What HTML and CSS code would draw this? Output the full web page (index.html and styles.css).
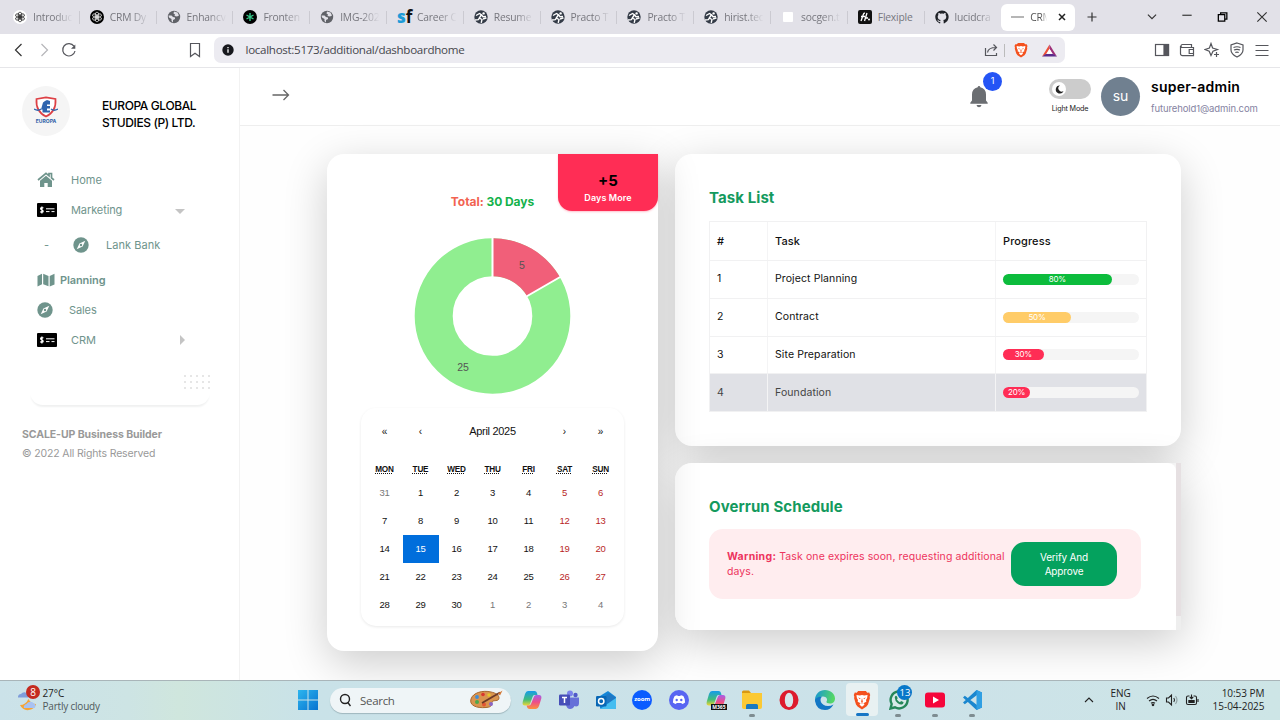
FILE: index.html
```html
<!DOCTYPE html>
<html lang="en">
<head>
<meta charset="utf-8">
<title>CRM</title>
<link rel="stylesheet" href="styles.css">
</head>
<body>
<svg class="defs" width="0" height="0">
  <symbol id="knot" viewBox="0 0 14 14"><g fill="none" stroke="currentColor" stroke-width=".8"><ellipse cx="7" cy="5" rx="1.800" ry="2.900"/><ellipse cx="7" cy="5" rx="1.800" ry="2.900" transform="rotate(60 7 7)"/><ellipse cx="7" cy="5" rx="1.800" ry="2.900" transform="rotate(120 7 7)"/><ellipse cx="7" cy="5" rx="1.800" ry="2.900" transform="rotate(180 7 7)"/><ellipse cx="7" cy="5" rx="1.800" ry="2.900" transform="rotate(240 7 7)"/><ellipse cx="7" cy="5" rx="1.800" ry="2.900" transform="rotate(300 7 7)"/></g></symbol>
  <symbol id="globe" viewBox="0 0 14 14"><circle cx="7" cy="7" r="6.200" fill="#606268"/><path d="M1.500 5.500h3L6 7l2 .5V9L6 10v2.500L4.500 11V9L2 7.500zM7 1.500 6.500 3.500 8 4.500 7.500 6 10 6.500l2-1-1.500-3z" fill="#e2e1e8"/></symbol>
  <symbol id="runner" viewBox="0 0 14 14"><circle cx="7" cy="7" r="6.700" fill="#343b47"/><circle cx="9.600" cy="3.400" r="1.200" fill="#fff"/><path d="M2 5.500 5.500 3.500l2.300 1.600 1.200 1.700 3-.3M7.300 5 5.300 8l2.700 1.500-.8 3.300M5.500 8 4.300 9.700l-3.300.3M9 9l3.500-1.200" fill="none" stroke="#fff" stroke-width="1.400"/></symbol>
  <symbol id="lion" viewBox="0 0 16 18"><path d="M4.500 1h7l1.200 1.400 1.800-.1.900 2.200-.5 1.600.2 1.400-1.700 5.500-1.400 1.900L8 17.500l-4-2.600L2.600 13 .9 7.500l.2-1.400-.5-1.600.9-2.200 1.800.1z" fill="#f4511e"/><path d="M3 4.500 6 5l2-.6 2 .6 3-.5-.4 2.700-1 1.800.3 1.500-2.200 1.200.5 1.600L8 15l-2.200-1.700.5-1.600-2.200-1.200.3-1.500-1-1.800z" fill="#fff"/><path d="m4.500 6.800 2.200.7-.6.8zM11.500 6.800l-2.200.7.6.8zM8 7.200l.8 3.300-.8.700-.8-.7zM6 12.200l2-.9 2 .9-2-.2z" fill="#f4511e"/></symbol>
  <symbol id="compass" viewBox="0 0 16 16"><circle cx="8" cy="8" r="7.700" fill="#6f948c"/><path d="m12.300 3.700-2.700 5.900-5.900 2.700 2.700-5.900z" fill="#fff"/><circle cx="8" cy="8" r="1.200" fill="#6f948c"/></symbol>
  <symbol id="cheque" viewBox="0 0 20 14"><rect width="20" height="14" rx="1" fill="#000"/><path d="M6.200 5.300C5.800 4.300 3.500 4.400 3.600 5.800s2.700 1 2.600 2.500-2.300 1.400-2.800.3M4.900 3.500v7" stroke="#fff" fill="none" stroke-width="1.200"/><path d="M9 5.800h8.500M9 8.600h3.500M14.500 8.600h3" stroke="#fff" stroke-width="1"/></symbol>
</svg>

<div class="tabs">
  <div class="tab"><i class="fav white"><svg><use href="#knot"/></svg></i><span>Introduc</span></div>
  <div class="tab"><i class="fav black"><svg><use href="#knot"/></svg></i><span>CRM Dy</span></div>
  <div class="tab"><i class="fav"><svg><use href="#globe"/></svg></i><span>Enhancv</span></div>
  <div class="tab"><i class="fav black"><svg viewBox="0 0 14 14"><path d="M7 3v8M3.500 5l7 4M10.500 5l-7 4" stroke="#35c98a" stroke-width="1.400"/></svg></i><span>Fronten</span></div>
  <div class="tab"><i class="fav"><svg><use href="#globe"/></svg></i><span>IMG-202</span></div>
  <div class="tab"><i class="fav sf"><b>s</b>f</i><span>Career C</span></div>
  <div class="tab"><i class="fav"><svg><use href="#runner"/></svg></i><span>Resume</span></div>
  <div class="tab"><i class="fav"><svg><use href="#runner"/></svg></i><span>Practo T</span></div>
  <div class="tab"><i class="fav"><svg><use href="#runner"/></svg></i><span>Practo T</span></div>
  <div class="tab"><i class="fav"><svg><use href="#runner"/></svg></i><span>hirist.tec</span></div>
  <div class="tab"><i class="fav blank"></i><span>socgen.t</span></div>
  <div class="tab"><i class="fav flex"><svg viewBox="0 0 14 14"><path d="M3 11 5.500 4q.4-1 1.500-.8M3 6.500h4M6.500 11 9 3M8 8h2" stroke="#fff" fill="none" stroke-width="1.300"/><circle cx="11" cy="9.500" r="1" fill="#fff"/></svg></i><span class="full">Flexiple</span></div>
  <div class="tab last"><i class="fav"><svg viewBox="0 0 16 16"><path fill="#202328" d="M8 .5C3.700.5.300 3.900.300 8.100c0 3.400 2.200 6.200 5.200 7.200.4.100.5-.2.500-.4v-1.400c-2.100.5-2.600-.9-2.600-.9-.3-.9-.8-1.100-.8-1.100-.7-.5.100-.5.100-.5.800.100 1.200.8 1.200.8.700 1.200 1.800.8 2.200.6.100-.5.300-.8.500-1-1.700-.2-3.500-.9-3.500-3.800 0-.8.300-1.500.8-2-.1-.2-.4-1 .1-2.100 0 0 .6-.2 2.100.8a7 7 0 0 1 3.800 0c1.500-1 2.100-.8 2.100-.8.500 1.100.2 1.900.1 2.100.5.500.8 1.200.8 2 0 2.900-1.800 3.600-3.500 3.800.3.200.5.700.5 1.400v2.100c0 .2.100.5.500.4 3-1 5.200-3.800 5.200-7.200C15.700 3.900 12.300.5 8 .5z"/></svg></i><span>lucidcra</span></div>
  <div class="tab active"><i class="fav dash"></i><span>CRM</span><svg class="x" viewBox="0 0 8 8"><path d="m1 1 6 6M7 1 1 7"/></svg></div>
  <svg class="plus" viewBox="0 0 10 10"><path d="M5 .5v9M.5 5h9"/></svg>
  <div class="window">
    <svg viewBox="0 0 12 12"><path d="m2.500 4 3.500 3.500L9.500 4"/></svg>
    <svg viewBox="0 0 12 12"><path d="M2 4.500h8"/></svg>
    <svg viewBox="0 0 12 12" class="bold"><path d="M2 4h5.500v5.500H2zM4 4V2.500h5.300v5.300H7.500"/></svg>
    <svg viewBox="0 0 12 12"><path d="m2 2 8 8m0-8-8 8"/></svg>
  </div>
</div>

<div class="toolbar">
  <div class="nav">
    <svg viewBox="0 0 16 16"><path d="M10.500 2 4.500 8l6 6"/></svg>
    <svg viewBox="0 0 16 16" class="dim"><path d="m5.500 2 6 6-6 6"/></svg>
    <svg viewBox="0 0 16 16"><path d="M13 4.200A6.200 6.200 0 1 0 14 9"/><path d="M14.300 2.500v4.300H10z" fill="#55565c" stroke="none"/></svg>
  </div>
  <svg class="mark" viewBox="0 0 16 16"><path d="M3.500 1.500h9v13L8 11.300l-4.500 3.200z"/></svg>
  <div class="url">
    <svg class="info" viewBox="0 0 12 12"><circle cx="6" cy="6" r="5.700" fill="#17181d"/><path d="M6 5.200v3.600M6 3v1.200" stroke="#fff" stroke-width="1.300"/></svg>
    <span>localhost:5173/additional/dashboardhome</span>
    <svg class="share" viewBox="0 0 14 14"><path d="M1.500 5v7.500h11V10M3.500 9.500C4 6 7 4.500 12 4.500M9.500 1.500l3 3-3 3"/></svg>
    <i class="bar"></i>
    <svg class="brave"><use href="#lion"/></svg>
    <svg class="bat" viewBox="0 0 16 14"><path d="M8 .5 0 13.500l4-2.300L8 5z" fill="#ee4f37"/><path d="m8 .5 8 13-4-2.300L8 5z" fill="#9d2f78"/><path d="M0 13.500h16l-4-2.800H4z" fill="#5a2b8c"/><path d="m8 5.500 3 5H5z" fill="#fff"/></svg>
  </div>
  <div class="tools">
    <svg viewBox="0 0 16 16"><rect x="1.500" y="2.500" width="13" height="11"/><path d="M10 2.500h4.500v11H10z" fill="#55565c"/></svg>
    <svg viewBox="0 0 16 16"><path d="M12.500 5V2.500h-9a1.500 1.500 0 0 0 0 3h11v8.200h-11a2 2 0 0 1-2-2V4M14.500 7.500h-4.300v4h4.300"/></svg>
    <svg viewBox="0 0 16 16"><path d="M7 1.500 8.600 6 13.500 7.500 9 9.200 7 13.500 5.200 9.200 1 7.500 5.400 6zM12.500 10v5M10 12.500h5"/></svg>
    <svg viewBox="0 0 16 16"><path d="M8 1 14 3v5c0 3.500-3 5.500-6 7-3-1.500-6-3.500-6-7V3zM4.500 5.500q3.500-1.500 7 0M5 8q3-1.300 6 0M6.300 10.500q1.700-.8 3.400 0"/></svg>
    <svg viewBox="0 0 16 16"><path d="M1.500 3.500h13M1.500 8.500h13M1.500 13.500h13"/></svg>
  </div>
</div>

<div class="app">
  <aside class="sidebar">
    <div class="brand">
      <div class="logo">
        <svg viewBox="0 0 24 21"><path d="M2.500 2.500Q8 1.500 12 .8q4 .7 9.500 1.700Q22.500 15 12 20 1.500 15 2.500 2.500z" fill="#fff" stroke="#dd4045" stroke-width="1.700"/><path d="M9 6q2-2 4-2.500l3 1V8h-3v1.500h3V12h-3v2h3v2H8.500v-3H7z" fill="#2f64ae"/><path d="M0 12.500q4 2.500 7 0M24 12.500q-4 2.500-7 0" stroke="#2f64ae" fill="none" stroke-width="1.300"/></svg>
        <span>EUROPA</span>
      </div>
      <div class="company">EUROPA GLOBAL<br>STUDIES (P) LTD.</div>
    </div>
    <nav class="menu">
      <div class="item home"><svg viewBox="0 0 18 16"><path d="M1 8 9 1.300l3 2.500V1.500h2.500v4.400L17 8" fill="none" stroke="#6f948c" stroke-width="1.700"/><path d="m3 8.800 6-5 6 5V15h-4.300v-4H7.300v4H3z" fill="#6f948c"/></svg><span>Home</span></div>
      <div class="item"><svg class="wide"><use href="#cheque"/></svg><span>Marketing</span><i class="down"></i></div>
      <div class="item sub"><em>-</em><svg class="round"><use href="#compass"/></svg><span>Lank Bank</span></div>
      <div class="item planning"><svg viewBox="0 0 18 14"><path d="M.5 3 5 .800v10.500L.5 13.500zM6.200.800 11.500 3v10.200l-5.300-2zM12.700 3 17.500.800v10.700l-4.800 2z" fill="#6f948c"/></svg><span>Planning</span></div>
      <div class="item sales"><svg class="round"><use href="#compass"/></svg><span>Sales</span></div>
      <div class="item"><svg class="wide"><use href="#cheque"/></svg><span>CRM</span><i class="right"></i></div>
      <div class="dots"></div>
    </nav>
    <div class="legal"><b>SCALE-UP Business Builder</b><span>© 2022 All Rights Reserved</span></div>
  </aside>

  <div class="page">
    <header class="header">
      <svg class="arrow" viewBox="0 0 18 12"><path d="M.5 6h16M11.500 1l5 5-5 5"/></svg>
      <div class="bell"><svg viewBox="0 0 18 22"><path d="M9 0q1.200 0 1.300 1.200Q16 2.500 16 8.500v6l1.700 2.200v1H.3v-1L2 14.500v-6q0-6 5.700-7.300Q7.800 0 9 0zM6.500 19h5Q11 21.200 9 21.200T6.500 19z" fill="#6b6e72"/></svg><span>1</span></div>
      <div class="mode"><div class="switch"><i><svg viewBox="0 0 10 10"><path d="M5.500.5a4.500 4.500 0 1 0 4 6.300A3.700 3.700 0 0 1 5.500.5z" fill="#222"/></svg></i></div><span>Light Mode</span></div>
      <div class="avatar">su</div>
      <div class="who"><b>super-admin</b><span>futurehold1@admin.com</span></div>
    </header>

    <main class="main">
      <section class="card days">
        <div class="more"><b>+5</b><span>Days More</span></div>
        <h3 class="total"><span>Total:</span> 30 Days</h3>
        <svg class="donut" viewBox="-79 -79 158 158">
          <g transform="translate(.5 0)">
          <circle r="58.800" fill="none" stroke="#90ee90" stroke-width="38"/>
          <path d="M0-77.800A77.800 77.800 0 0 1 67.400-38.900L34.500-19.900A39.800 39.800 0 0 0 0-39.800z" fill="#f15f79"/>
          <path d="M0-79v41M68.500-39.500 33-19" stroke="#fff" stroke-width="2"/>
          <text x="29.500" y="-47.500">5</text><text x="-29.500" y="54.500">25</text>
          </g>
        </svg>
        <div class="calendar">
          <div class="calnav"><span>«</span><span>‹</span><b>April 2025</b><span>›</span><span>»</span></div>
          <div class="grid week"><abbr>MON</abbr><abbr>TUE</abbr><abbr>WED</abbr><abbr>THU</abbr><abbr>FRI</abbr><abbr>SAT</abbr><abbr>SUN</abbr></div>
          <div class="grid dates">
            <span class="out">31</span><span>1</span><span>2</span><span>3</span><span>4</span><span class="red">5</span><span class="red">6</span>
            <span>7</span><span>8</span><span>9</span><span>10</span><span>11</span><span class="red">12</span><span class="red">13</span>
            <span>14</span><span class="today">15</span><span>16</span><span>17</span><span>18</span><span class="red">19</span><span class="red">20</span>
            <span>21</span><span>22</span><span>23</span><span>24</span><span>25</span><span class="red">26</span><span class="red">27</span>
            <span>28</span><span>29</span><span>30</span><span class="out">1</span><span class="out">2</span><span class="out">3</span><span class="out">4</span>
          </div>
        </div>
      </section>

      <div class="column">
        <section class="card tasks">
          <h2>Task List</h2>
          <div class="table">
            <div class="tr th"><span>#</span><span>Task</span><span>Progress</span></div>
            <div class="tr"><span>1</span><span>Project Planning</span><span><i class="track"><i class="fill green" style="width:80%">80%</i></i></span></div>
            <div class="tr"><span>2</span><span>Contract</span><span><i class="track"><i class="fill yellow" style="width:50%">50%</i></i></span></div>
            <div class="tr"><span>3</span><span>Site Preparation</span><span><i class="track"><i class="fill pink" style="width:30%">30%</i></i></span></div>
            <div class="tr hover"><span>4</span><span>Foundation</span><span><i class="track"><i class="fill pink" style="width:20%">20%</i></i></span></div>
          </div>
        </section>
        <section class="card overrun">
          <div class="body">
            <h2>Overrun Schedule</h2>
            <div class="alert"><p><b>Warning:</b> <span>Task one expires soon, requesting additional</span><br>days.</p><button>Verify And<br>Approve</button></div>
          </div>
          <div class="scroll"><i></i></div>
        </section>
      </div>
    </main>
  </div>
</div>

<div class="taskbar">
  <div class="weather">
    <div class="sky"><svg viewBox="0 0 22 24"><path d="M1 9.500a3 3 0 0 1 3-3.500 4 4 0 0 1 7 .5v3z" fill="#7f9edb"/><path d="M11.500 11q-3 6-8.500 6 3 6 9 5t7-6q-5 0-7.500-5z" fill="#f6a536"/><path d="M7 20a3 3 0 0 1 2.500-4 4.500 4.500 0 0 1 7.500-.5 2.700 2.700 0 0 1 .5 4.500z" fill="#a8c2f2"/></svg><i>8</i></div>
    <div class="temp"><b>27°C</b><span>Partly cloudy</span></div>
  </div>
  <svg class="start" viewBox="0 0 20 20"><defs><linearGradient id="w" x1="0" y1="0" x2="1" y2="1"><stop stop-color="#2cb5ee"/><stop offset="1" stop-color="#0873d0"/></linearGradient></defs><path d="M0 0h9.500v9.500H0zM10.500 0H20v9.500h-9.500zM0 10.500h9.500V20H0zM10.500 10.500H20V20h-9.500z" fill="url(#w)"/></svg>
  <div class="search">
    <svg class="lens" viewBox="0 0 12 14"><circle cx="6" cy="6" r="4.500"/><path d="m8.800 9.500 2.700 3.500"/></svg><span>Search</span>
    <svg class="palette" viewBox="0 0 36 20"><path d="M3 9C5 2.500 15 0 23 2c5 1 8 3 8 6 0 4-6 1.500-7 4s1 5-6 5.500C8 18.500 1 15 3 9z" fill="#d9944f" stroke="#a86830"/><circle cx="9" cy="7" r="1.900" fill="#3d8ed8"/><circle cx="15" cy="4.500" r="1.800" fill="#d9362e"/><circle cx="21" cy="5" r="1.700" fill="#e7c728"/><circle cx="9" cy="12" r="2" fill="#4da84c"/><circle cx="16" cy="14.500" r="2" fill="#e25535"/><circle cx="23" cy="14" r="2" fill="#8a66c5"/><path d="m14 13 18-10.500" stroke="#6c3927" stroke-width="1.800"/><path d="m30 3.500 4.500-3-2.500 5z" fill="#d37733"/></svg>
  </div>
  <div class="apps">
    <div class="slot"><svg viewBox="0 0 20 20"><defs><linearGradient id="ca" x1="0" y1="0" x2="0" y2="1"><stop stop-color="#169bea"/><stop offset=".6" stop-color="#43bd78"/><stop offset="1" stop-color="#efd637"/></linearGradient><linearGradient id="cb" x1="0" y1="0" x2="0" y2="1"><stop stop-color="#a65fe8"/><stop offset=".5" stop-color="#ed4d89"/><stop offset="1" stop-color="#fb923c"/></linearGradient></defs><path d="M6 1h6.500q2 0 2.500 2l.5 2h-3q-1.500 0-2 2L8 14q-.6 1.500-2 1.500H3Q0 15.500.7 12L3 4q1-3 3-3z" fill="url(#ca)"/><path d="M14 19H7.500q-2 0-2.500-2l-.3-1.500H7q1.500 0 2.200-2L12 6.500Q12.600 5 14 5h3q3 0 2.300 3.500L17 16q-1 3-3 3z" fill="url(#cb)"/></svg></div>
    <div class="slot"><svg viewBox="0 0 20 20"><circle cx="16.500" cy="5" r="2.200" fill="#5059c9"/><circle cx="11" cy="3.500" r="3" fill="#7b83eb"/><path d="M8 7.500h12V13q0 3.500-3 3.500l-1.500-.5Q14 19 11 19t-4-4z" fill="#6770d8"/><rect y="4.500" width="11" height="11" rx="1.200" fill="#464eb8"/><path d="M3 7.500h5M5.500 7.500V13" stroke="#fff" stroke-width="1.500"/></svg></div>
    <div class="slot"><svg viewBox="0 0 20 20"><path d="M4 6 12 1l8 6v10.500q0 1.500-1.500 1.500h-13Q4 19 4 17.500z" fill="#1486d8"/><path d="m8 7 5-4 7 5-8 6z" fill="#1f78c4"/><path d="m4 19 16-11v9.500q0 1.500-1.500 1.500z" fill="#45bdf0"/><rect y="6" width="10.500" height="10.500" rx="1.200" fill="#0967b5"/><circle cx="5.200" cy="11.200" r="2.700" fill="none" stroke="#fff" stroke-width="1.500"/></svg></div>
    <div class="slot"><i class="zoom">zoom</i></div>
    <div class="slot"><svg viewBox="0 0 20 20"><circle cx="10" cy="10" r="10" fill="#5865f2"/><path d="M5.500 6.200Q7 5.300 8.300 5.200l.4.700h2.600l.4-.7q1.300.1 2.800 1 1.800 3 1.600 6.300-1.500 1.300-3 1.600l-.8-1.200H7.700l-.8 1.200q-1.500-.3-3-1.600-.2-3.300 1.600-6.300z" fill="#fff"/><circle cx="7.700" cy="10" r="1.200" fill="#5865f2"/><circle cx="12.300" cy="10" r="1.200" fill="#5865f2"/></svg></div>
    <div class="slot"><svg viewBox="0 0 20 20"><path d="M6 1h6.500q2 0 2.500 2l.5 2h-3q-1.500 0-2 2L8 14q-.6 1.500-2 1.500H3Q0 15.500.7 12L3 4q1-3 3-3z" fill="url(#ca)"/><path d="M14 19H7.500L4.700 15.500H7q1.500 0 2.200-2L12 6.500Q12.600 5 14 5h3q3 0 2.300 3.500L17 16q-1 3-3 3z" fill="url(#cb)"/></svg><i class="m365">M365</i></div>
    <div class="slot run"><svg viewBox="0 0 20 20"><path d="M0 2q0-1.500 1.500-1.500H7L9 3H0z" fill="#d99913"/><path d="M0 3h20v14q0 2-2 2H2q-2 0-2-2z" fill="#fbc934"/><path d="M4 19v-3.500q0-1.500 1.500-1.500h9q1.500 0 1.500 1.500V19z" fill="#1879bf"/></svg></div>
    <div class="slot"><svg viewBox="0 0 20 20"><ellipse cx="10" cy="10" rx="9.500" ry="10" fill="#dd1b2d"/><ellipse cx="10" cy="10" rx="4.200" ry="7.300" fill="#d5e6eb"/></svg></div>
    <div class="slot"><svg viewBox="0 0 20 20"><defs><linearGradient id="ed" x1="0" y1="0" x2="1" y2=".2"><stop stop-color="#1594d8"/><stop offset="1" stop-color="#54d765"/></linearGradient></defs><path d="M0 10C0 4 4.500 0 10 0s10 4 10 8.500c0 3-2 5-5 5-2.500 0-4-1-3.500-2 1.500-2 0-5-3.500-5-4 0-8 3-8 6z" fill="url(#ed)"/><path d="M0 11c0-3 3.500-4.700 7-4.200C4 9 5.500 16 13 16q3 0 5.500-1.500Q15.500 20 10 20 1.500 20 0 11z" fill="#1276c5"/></svg></div>
    <div class="slot current"><svg viewBox="0 0 16 18"><use href="#lion"/></svg></div>
    <div class="slot run"><svg viewBox="0 0 20 20"><path d="M1.500 18.500 2.700 14A8.500 8.500 0 1 1 6 17.300z" fill="#d7e9e8" stroke="#268759" stroke-width="2.400"/><path d="M6 6.500q1-1.500 2 0l.7 1.700-.8 1.300q1 1.800 3 2.700l1.200-1.200 2.200 1q.8.500-.5 2-2 1.500-5-.8T6 8.500q-.5-1 0-2z" fill="#268759"/></svg><i class="count">13</i></div>
    <div class="slot run"><svg viewBox="0 0 20 20"><rect y="2.500" width="20" height="15" rx="3" fill="#f6063b"/><path d="m8 6.500 6 3.500-6 3.500z" fill="#fff"/></svg></div>
    <div class="slot run"><svg viewBox="0 0 20 20"><path d="M14.500 0 20 2.500v15L14.500 20 1 7.500 2.800 5.800 15 15V5L2.800 14.200 1 12.500z" fill="#1b87cf"/><path d="M14.500 0 20 2.500v15L14.500 20z" fill="#2f9fe3"/></svg></div>
  </div>
  <div class="tray">
    <svg class="chev" viewBox="0 0 10 10"><path d="m1 7 4-4 4 4"/></svg>
    <div class="lang">ENG<br>IN</div>
    <div class="status">
      <svg viewBox="0 0 14 14"><path d="M1 5.500q6-5 12 0M3 8q4-3.300 8 0M5 10.300q2-1.600 4 0"/><circle cx="7" cy="11.800" r=".8" fill="#222"/></svg>
      <svg viewBox="0 0 14 14"><path d="M1.500 5h2l3-3v10l-3-3h-2zM8.800 5q1.500 2 0 4"/><path d="M10.500 3q3 4 0 8" opacity=".35"/></svg>
      <svg viewBox="0 0 14 14"><path d="M4.500 3H3Q1.500 3 1.500 4.500V10q0 1.500 1.500 1.500h7q1.500 0 1.500-1.500V4.500Q11.500 3 10 3H8.500M13 6v3M6.500 1.500v4M4.800 4l1.700 1.700L8.200 4"/><path d="M3.300 7h6.400v3H3.300z" fill="#222" stroke="none"/></svg>
    </div>
    <div class="clock">10:53 PM<br>15-04-2025</div>
  </div>
</div>
</body>
</html>
```
FILE: styles.css
```css
* { box-sizing: border-box; }
body { margin: 0; width: 1280px; height: 720px; overflow: hidden; background: #fff; font-family: Inter, "Open Sans", sans-serif; color: #111; display: flex; flex-direction: column; }
i, em { font-style: normal; }
h2, h3, p { margin: 0; }
svg { display: block; flex: none; }
.defs { position: absolute; }

/* browser tabs */
.tabs { height: 34px; flex: none; background: #e2e1e8; display: flex; align-items: center; padding-left: 3px; font-family: "Open Sans", sans-serif; font-size: 10.300px; color: #77777e; }
.tab { width: 76.8px; height: 27px; flex: none; display: flex; align-items: center; padding-left: 10px; position: relative; }
.tab:not(.last):not(.active)::after { content: ""; position: absolute; right: 0; top: 7px; width: 1px; height: 13px; background: #cbcad1; }
.tab span { width: 43px; margin-left: 6px; white-space: nowrap; letter-spacing: -.2px; -webkit-mask-image: linear-gradient(90deg, #000 50%, transparent 92%); mask-image: linear-gradient(90deg, #000 50%, transparent 92%); }
.tab .full { -webkit-mask-image: none; mask-image: none; }
.fav { width: 14px; height: 14px; flex: none; border-radius: 50%; }
.fav svg { width: 14px; height: 14px; }
.fav.white { background: #fff; color: #333; }
.fav.black { background: #000; color: #ddd; }
.fav.blank { background: #fff; border-radius: 1px; width: 10px; height: 10px; margin: 0 2px; }
.fav.flex { background: #111; border-radius: 2px; }
.fav.sf { color: #111; font: bold 17px/13px "Open Sans", sans-serif; display: flex; }
.fav.sf b { color: #1d9bd7; }
.tab.active { width: 73.500px; background: #fff; border-radius: 6px; color: #555; }
.tab.active span { width: 22px; letter-spacing: -.3px; -webkit-mask-image: linear-gradient(90deg, #000 50%, transparent 78%); mask-image: linear-gradient(90deg, #000 50%, transparent 78%); }
.fav.dash { height: 2px; width: 13px; background: #b6b6b6; border-radius: 0; }
.x { width: 8px; height: 8px; margin-left: 5.500px; stroke: #222; stroke-width: 1.500; }
.plus { width: 10px; height: 10px; margin-left: 12.500px; stroke: #333; stroke-width: 1.200; }
.window { display: flex; gap: 21.500px; margin-left: 47.500px; }
.window svg { width: 14px; height: 14px; fill: none; stroke: #333; stroke-width: 1; }
.window .bold { stroke: #000; stroke-width: 1.100; }
.window svg:last-child { margin-left: 4px; }

/* address bar */
.toolbar { height: 34px; flex: none; display: flex; align-items: center; border-bottom: 1px solid #e6e6e9; padding: 0 10px 1px 11px; }
.toolbar svg { width: 16px; height: 16px; fill: none; stroke: #55565c; stroke-width: 1.200; }
.nav { display: flex; gap: 9px; width: 176px; }
.nav .dim { stroke: #b5b5b9; }
.nav svg:first-child { stroke: #333; }
.url { width: 851px; height: 26px; margin-left: 11px; background: #ecebf1; border-radius: 7px; display: flex; align-items: center; padding-left: 8px; font: 11.600px "Open Sans", sans-serif; color: #46474d; }
.url .info { width: 12px; height: 12px; stroke: none; }
.url span { width: 750px; flex: none; padding: 0 0 1px 11.500px; letter-spacing: -.3px; }
.url .share { width: 14px; height: 14px; }
.bar { width: 1px; height: 13px; background: #bbb; margin: 0 9px 0 6px; }
.url .brave { width: 14px; height: 16px; stroke: none; }
.url .bat { width: 15px; height: 13px; stroke: none; margin-left: 14px; }
.tools { margin-left: auto; display: flex; gap: 9px; }

/* application */
.app { height: 612px; flex: none; display: flex; overflow: hidden; }
.sidebar { width: 240px; flex: none; border-right: 1px solid #f2f2f2; background: #fff; }
.brand { height: 86px; display: flex; align-items: center; padding: 0 0 0 22px; }
.logo { width: 48px; height: 50px; border-radius: 50%; background: #f5f5f5; display: flex; flex-direction: column; align-items: center; padding-top: 10px; }
.logo svg { width: 24px; height: 22px; }
.logo span { font: bold 5px/6px Inter, sans-serif; color: #2c5da6; }
.company { margin: 6px 0 0 32px; font-size: 12px; line-height: 17.500px; font-weight: 500; color: #000; white-space: nowrap; letter-spacing: -.4px; }
.menu { margin: 0 29px 0 30px; height: 251px; padding-top: 11px; border-radius: 13px; box-shadow: 0 3px 2px -1px #f0f1f1; }
.item { height: 30px; display: flex; align-items: center; padding-left: 7px; font-size: 11px; color: #6f948c; }
.item svg { width: 18px; height: 16px; }
.item .wide { width: 20px; height: 14px; }
.item .round { width: 16px; height: 16px; }
.item span { margin-left: 14px; letter-spacing: -.1px; }
.item.home span { margin-left: 16px; letter-spacing: 0; }
.item.sub { height: 40px; }
.sub em { width: 36px; padding-left: 7px; }
.item.sub span { margin-left: 17px; letter-spacing: .05px; }
.item.planning span { margin-left: 5px; font-weight: 600; letter-spacing: -.1px; }
.item.sales span { margin-left: 16px; }
.down { border: 5px solid transparent; border-top-color: #c4c4c4; border-bottom: 0; margin: 3px 25px 0 auto; }
.right { border: 5px solid transparent; border-left-color: #c4c4c4; border-right: 0; margin: 0 25px 0 auto; }
.dots { width: 27px; height: 16px; margin: 19px 0 0 153px; background: radial-gradient(circle at 2px 2px, #e6e6e6 .8px, transparent 1.300px) 0 0 / 6px 6px; }
.legal { padding: 20px 0 0 22px; font-size: 10.500px; line-height: 19px; color: #999; display: flex; flex-direction: column; white-space: nowrap; }
.legal b { letter-spacing: -.08px; }
.legal span { letter-spacing: -.15px; }
.page { flex: 1; display: flex; flex-direction: column; }
.header { height: 58px; flex: none; border-bottom: 1px solid #eee; display: flex; align-items: center; padding-left: 32px; position: relative; z-index: 2; }
.arrow { width: 18px; height: 12px; fill: none; stroke: #666; stroke-width: 1.300; margin-top: -3px; }
.bell { width: 18px; height: 22px; margin-left: 680px; position: relative; }
.bell svg { width: 18px; height: 22px; }
.bell span { position: absolute; left: 13px; top: -14px; width: 19px; height: 19px; border-radius: 50%; background: #2454f5; color: #fff; font-size: 9px; line-height: 18px; text-align: center; }
.mode { width: 42px; margin: 0 0 0 61px; text-align: center; font-size: 7.200px; line-height: 10px; white-space: nowrap; color: #222; letter-spacing: -.15px; }
.switch { height: 20px; border-radius: 10px; background: #ccc; padding: 3px; margin: 0 0 5px; }
.switch i { display: flex; width: 14px; height: 14px; border-radius: 50%; background: #fff; align-items: center; justify-content: center; }
.switch svg { width: 9px; height: 9px; }
.avatar { width: 39px; height: 39px; margin-left: 10px; border-radius: 50%; background: #708090; color: #fff; font-size: 14px; line-height: 37px; text-align: center; }
.who { margin: 4px 0 0 11px; white-space: nowrap; display: flex; flex-direction: column; }
.who b { font-size: 14px; font-weight: 600; line-height: 20px; color: #000; letter-spacing: .25px; }
.who span { font-size: 9.500px; line-height: 23px; color: #8583a2; letter-spacing: -.1px; }

.main { flex: 1; display: flex; gap: 17px; padding: 28px 0 0 87px; background: #fefefe; }
.card { background: #fff; border-radius: 17px; box-shadow: 0 12px 44px rgba(0,0,0,.2); }
.days { width: 331px; height: 497px; position: relative; border-top-right-radius: 0; display: flex; flex-direction: column; align-items: center; padding-top: 39px; }
.more { position: absolute; right: 0; top: 0; z-index: 1; width: 100px; height: 57px; border-radius: 0 0 14px 14px; background: #ff2d55; text-align: center; color: #fff; display: flex; flex-direction: column; padding-top: 18px; box-shadow: 0 1px 2px rgba(255,45,85,.3); }
.more b { color: #000; font-size: 15px; line-height: 17px; }
.more span { font-size: 9px; line-height: 17px; font-weight: 600; letter-spacing: .1px; }
.total { font-size: 12px; line-height: 18px; color: #14b24b; font-weight: 700; letter-spacing: -.05px; }
.total span { color: #f26351; }
.donut { width: 158px; height: 158px; margin: 26px 1px 0 0; }
.donut text { font: 10.500px "Liberation Sans", sans-serif; fill: #555; text-anchor: middle; }
.calendar { width: 263px; height: 218px; margin: 13px 1px 0 0; border-radius: 15px; box-shadow: 0 1px 3px rgba(0,0,0,.09); padding: 6px 5px 6px 6px; font-family: "Liberation Sans", sans-serif; }
.calnav { height: 34px; display: grid; grid-template-columns: 36px 36px 1fr 36px 36px; align-items: center; text-align: center; font-size: 10px; }
.calnav b { font-weight: 400; font-size: 11px; letter-spacing: -.3px; }
.grid { display: grid; grid-template-columns: repeat(7, 1fr); text-align: center; }
.week { margin-top: 14px; height: 17px; font-weight: bold; font-size: 8.200px; line-height: 15px; letter-spacing: -.2px; }
.week abbr { text-decoration: underline dotted; }
.dates { grid-auto-rows: 28.100px; line-height: 27.500px; font-size: 9.500px; letter-spacing: -.2px; color: #111; }
.red { color: #b91f1f; }
.out { color: #777; }
.today { background: #006edc; color: #fff; }
.column { display: flex; flex-direction: column; gap: 17px; }
h2 { font-size: 15px; line-height: 20px; color: #149a5e; font-weight: 700; letter-spacing: .08px; }
.tasks { width: 506px; height: 292px; padding: 34px 0 0 34px; }
.table { width: 438px; margin-top: 13px; border: 1px solid #f1f1f2; }
.tr { height: 37.750px; display: grid; grid-template-columns: 57px 228px 1fr; font-size: 10.500px; border-top: 1px solid #f1f1f2; letter-spacing: .1px; }
.tr > span { padding: 0 7px 1px; display: flex; align-items: center; }
.tr > span:last-child { padding-bottom: 0; }
.tr > span + span { border-left: 1px solid #f4f4f5; }
.tr.th { height: 38px; font-weight: 500; border-top: 0; font-size: 11px; }
.tr.th > span { padding-bottom: 1px; }
.tr.hover { background: #e0e1e6; color: #444; }
.track { width: 136px; height: 11px; border-radius: 6px; background: #f5f5f5; display: block; }
.fill { display: block; height: 11px; border-radius: 6px; color: #fff; font-size: 8px; line-height: 11px; text-align: center; letter-spacing: -.2px; }
.green { background: #0cbc3c; }
.yellow { background: #ffcc68; }
.pink { background: #ff2d55; }
.overrun { width: 506px; height: 166.500px; display: flex; border-radius: 17px 0 0 17px; background: none; }
.body { width: 500.500px; background: #fff; border-radius: 17px 8px 8px 17px; padding: 34px 0 0 34px; }
.scroll { width: 5.500px; background: #eee; }
.scroll i { display: block; height: 153px; background: #e6e0e2; }
.alert { width: 432px; height: 70px; margin-top: 12px; border-radius: 14px; background: #ffedef; display: flex; align-items: center; padding-left: 18px; color: #ed345d; font-size: 10.500px; line-height: 15.500px; }
.alert p { width: 284px; white-space: nowrap; letter-spacing: .1px; }
.alert b { letter-spacing: .3px; }
.alert button { width: 106px; height: 44px; border: 0; border-radius: 14px; background: #04a25e; color: #fff; font: 10px/14px Inter, sans-serif; padding: 0; letter-spacing: -.15px; }

/* taskbar */
.taskbar { height: 40px; flex: none; border-top: 1px solid #a9b5b9; background: linear-gradient(90deg, #cbe2e9 0, #cde4e4 10%, #cfe6dd 14%, #c9e2e8 24%, #cce2e9 70%, #cde5e6 100%); display: flex; align-items: center; padding: 0 0 1px 17px; font: 10px/13px "Open Sans", sans-serif; color: #222; position: relative; z-index: 3; white-space: nowrap; }
.weather { display: flex; width: 281px; }
.sky { position: relative; width: 22px; height: 24px; margin-top: 1px; }
.sky svg { width: 22px; height: 24px; }
.sky i { position: absolute; left: 9px; top: -3px; width: 14px; height: 14px; border-radius: 50%; background: #c42b20; color: #fff; text-align: center; font-size: 10px; line-height: 14px; }
.temp { display: flex; flex-direction: column; margin-left: 3.500px; }
.temp b { font-weight: 400; letter-spacing: -.1px; }
.temp span { color: #50595c; letter-spacing: -.2px; }
.start { width: 20px; height: 20px; }
.search { width: 181px; height: 25px; margin-left: 12px; border-radius: 13px; background: #eff5f7; box-shadow: 0 1px 1px #9fb7be; display: flex; align-items: center; padding-left: 9px; font-size: 11.500px; color: #555; }
.lens { width: 12px; height: 14px; fill: none; stroke: #222; stroke-width: 1.400; }
.search span { margin-left: 9px; width: 108px; letter-spacing: -.3px; }
.palette { width: 36px; height: 20px; }
.apps { display: flex; margin-left: 3px; }
.slot { width: 36.650px; height: 36px; display: flex; align-items: center; justify-content: center; position: relative; }
.slot svg { width: 20px; height: 20px; }
.slot.run::after, .slot.current::after { content: ""; position: absolute; bottom: 1px; left: 15px; width: 6px; height: 3px; border-radius: 2px; background: #7e8c91; }
.slot.current { width: 32.650px; margin: 1px 2px 0; height: 33px; background: #e8f1f2; border-radius: 4px; }
.slot.current::after { width: 13px; left: 10px; bottom: 0; background: #1876c5; }
.zoom { width: 20px; height: 20px; border-radius: 50%; background: #0b5cff; color: #fff; font: bold 6px/19px "Open Sans", sans-serif; text-align: center; letter-spacing: -.1px; }
.m365 { position: absolute; left: 14px; top: 22px; background: #111; color: #fff; font: bold 5px/6px "Open Sans", sans-serif; padding: 0 1px; }
.count { position: absolute; left: 17px; top: 3px; width: 15px; height: 15px; border-radius: 50%; background: #0878c9; color: #fff; font-size: 9.500px; line-height: 15px; text-align: center; }
.tray { margin-left: auto; display: flex; align-items: center; padding-right: 15.500px; }
.tray svg { fill: none; stroke: #222; stroke-width: 1.100; }
.chev { width: 10px; height: 10px; }
.lang { width: 30px; margin-left: 12px; text-align: center; }
.status { display: flex; gap: 5px; margin-left: 10px; width: 67px; }
.status svg { width: 14px; height: 14px; }
.status svg:last-child { margin-left: 1px; }
.clock { text-align: right; letter-spacing: -.03px; }
```
